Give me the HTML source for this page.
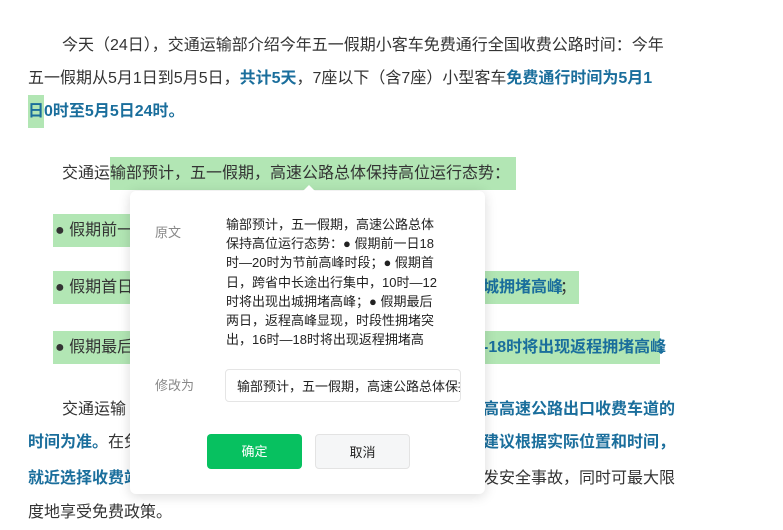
<!DOCTYPE html>
<html><head><meta charset="utf-8"><style>
body{margin:0;width:783px;height:530px;background:#fff;position:relative;overflow:hidden;font-family:"Liberation Sans","Noto Sans CJK SC",sans-serif;color:#333;font-size:16px}
.l{position:absolute;white-space:nowrap;line-height:33px;height:33px}
.b{color:#1a6e9c;font-weight:bold}
.h{background:#b2e6b4}
.pop{position:absolute;left:130px;top:191px;width:355px;height:303px;background:#fff;border-radius:6px;box-shadow:0 2px 12px rgba(0,0,0,.15)}
.arr{position:absolute;left:302px;top:185px;width:0;height:0;border-left:7px solid transparent;border-right:7px solid transparent;border-bottom:7px solid #fff}
.lab{position:absolute;color:#888;font-size:13px}
.orig{position:absolute;left:96px;top:24px;width:250px;font-size:13px;line-height:19.2px;color:#222;white-space:nowrap}
.inp{position:absolute;left:95px;top:178px;width:236px;height:33px;border:1px solid #e5e5e5;border-radius:4px;font-size:13px;line-height:33px;padding-left:11px;box-sizing:border-box;overflow:hidden;white-space:nowrap;color:#222}
.btn{position:absolute;top:243px;width:95px;height:35px;border-radius:4px;font-size:13px;line-height:35px;text-align:center;box-sizing:border-box}
</style></head><body>
<div class="l" style="left:62px;top:29px">今天（24日），交通运输部介绍今年五一假期小客车免费通行全国收费公路时间：今年</div>
<div class="l" style="left:28px;top:62px">五一假期从5月1日到5月5日，<span class="b">共计5天</span>，7座以下（含7座）小型客车<span class="b">免费通行时间为5月1</span></div>
<div class="l" style="left:28px;top:95px"><span class="b"><span class="h" style="display:inline-block;height:33px">日</span>0时至5月5日24时。</span></div>
<div class="l" style="left:62px;top:157px">交通运<span class="h" style="display:inline-block;padding-right:6px">输部预计，五一假期，高速公路总体保持高位运行态势：</span></div>
<div class="l h" style="left:53px;top:214px;width:85px;padding-left:2px">● 假期前一</div>
<div class="l h" style="left:53px;top:271px;width:524px;padding-left:2px">● 假期首日<span class="b" style="position:absolute;left:430px">城拥堵高峰</span><span style="position:absolute;left:507px">；</span></div>
<div class="l h" style="left:53px;top:331px;width:605px;padding-left:2px">● 假期最后<span class="b" style="position:absolute;left:430px">-18时将出现返程拥堵高峰</span></div>
<div class="l b" style="left:658px;top:331px">。</div>
<div class="l" style="left:62px;top:393px">交通运输</div>
<div class="l b" style="left:483px;top:393px">高高速公路出口收费车道的</div>
<div class="l" style="left:28px;top:426px"><span class="b">时间为准。</span>在免</div>
<div class="l b" style="left:483px;top:426px">建议根据实际位置和时间，</div>
<div class="l b" style="left:28px;top:462px">就近选择收费站</div>
<div class="l" style="left:483px;top:462px">发安全事故，同时可最大限</div>
<div class="l" style="left:28px;top:496px">度地享受免费政策。</div>
<div class="pop">
<div class="lab" style="left:25px;top:31px">原文</div>
<div class="orig">输部预计，五一假期，高速公路总体<br>保持高位运行态势：● 假期前一日18<br>时—20时为节前高峰时段；● 假期首<br>日，跨省中长途出行集中，10时—12<br>时将出现出城拥堵高峰；● 假期最后<br>两日，返程高峰显现，时段性拥堵突<br>出，16时—18时将出现返程拥堵高</div>
<div class="lab" style="left:25px;top:184px">修改为</div>
<div class="inp">输部预计，五一假期，高速公路总体保持高位运行态势</div>
<div class="btn" style="left:77px;background:#07c160;color:#fff">确定</div>
<div class="btn" style="left:185px;background:#f5f6f7;border:1px solid #e3e3e3;color:#222">取消</div>
</div>
<div class="arr"></div>
</body></html>
